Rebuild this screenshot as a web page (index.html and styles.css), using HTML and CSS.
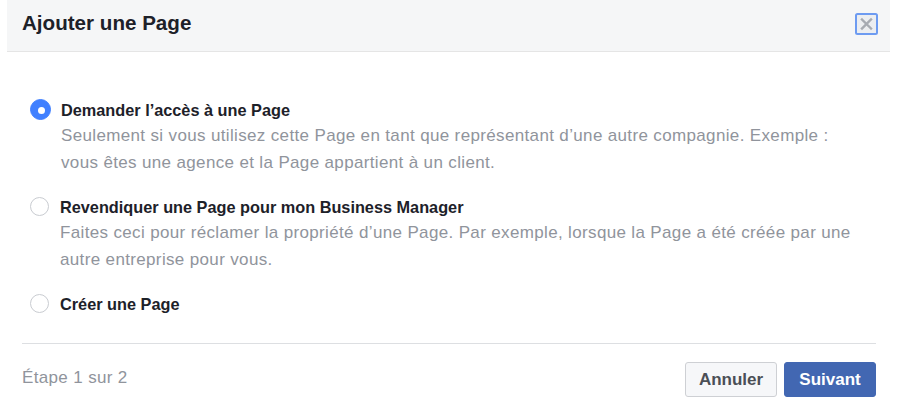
FILE: index.html
```html
<!DOCTYPE html>
<html lang="fr">
<head>
    <meta charset="UTF-8">
    <title>Ajouter une Page</title>
    <link rel="stylesheet" href="styles.css">
</head>
<body>
    <div class="dialog">
        <div class="dialog-header">
            <h1 class="dialog-title">Ajouter une Page</h1>
            <button class="close-btn" aria-label="Fermer">
                <svg width="23" height="22" viewBox="0 0 23 22">
                    <rect x="1" y="1" width="21" height="20" rx="1.5" fill="#eceef1" stroke="#6d9bf1" stroke-width="2"/>
                    <path d="M7 6.5 L16 15.5 M16 6.5 L7 15.5" stroke="#a7abb2" stroke-width="2.4" stroke-linecap="square"/>
                </svg>
            </button>
        </div>

        <div class="dialog-body">
            <label class="option">
                <span class="radio checked"></span>
                <span class="option-text">
                    <span class="option-label">Demander l’accès à une Page</span>
                    <span class="option-desc">Seulement si vous utilisez cette Page en tant que représentant d’une autre compagnie. Exemple : vous êtes une agence et la Page appartient à un client.</span>
                </span>
            </label>
            <label class="option">
                <span class="radio"></span>
                <span class="option-text">
                    <span class="option-label">Revendiquer une Page pour mon Business Manager</span>
                    <span class="option-desc">Faites ceci pour réclamer la propriété d’une Page. Par exemple, lorsque la Page a été créée par une autre entreprise pour vous.</span>
                </span>
            </label>
            <label class="option">
                <span class="radio"></span>
                <span class="option-text">
                    <span class="option-label">Créer une Page</span>
                </span>
            </label>
        </div>

        <div class="dialog-footer">
            <span class="step">Étape 1 sur 2</span>
            <div class="actions">
                <button class="btn">Annuler</button>
                <button class="btn btn-primary">Suivant</button>
            </div>
        </div>
    </div>
</body>
</html>
```

FILE: styles.css
```css
body {
    margin: 0;
    background-color: #fff;
    font-family: "Liberation Sans", Arial, Helvetica, sans-serif;
    color: #1d2129;
}
.dialog {
    width: 883px;
    margin-left: 7px;
}
.dialog-header {
    height: 51px;
    background-color: #f5f6f7;
    border-bottom: 1px solid #e5e5e5;
    display: flex;
    align-items: flex-start;
    justify-content: space-between;
    padding: 0 12px 0 15px;
}
.dialog-title {
    margin: 0;
    padding-top: 11px;
    font-size: 20.6px;
    line-height: 24px;
    font-weight: bold;
    color: #1d2129;
}
.close-btn {
    margin-top: 13px;
    padding: 0;
    border: 0;
    background: none;
    width: 23px;
    height: 22px;
    display: block;
}
.close-btn svg {
    display: block;
}
.dialog-body {
    padding: 47px 30px 28px 23px;
}
.option {
    display: flex;
    align-items: flex-start;
    margin-bottom: 20px;
}
.option:last-child {
    margin-bottom: 0;
}
.radio {
    flex: none;
    width: 19px;
    height: 19px;
    margin: 1px 11px 0 0;
    border: 1px solid #c9ccd1;
    border-radius: 50%;
    background-color: #fff;
    box-sizing: border-box;
    position: relative;
}
.radio.checked {
    border-color: #4080ff;
    background-color: #4080ff;
    width: 21px;
    height: 21px;
    margin: 0 10px 0 0;
}
.radio.checked::after {
    content: "";
    position: absolute;
    left: 7px;
    top: 7px;
    width: 7px;
    height: 7px;
    border-radius: 50%;
    background-color: #fff;
}
.option-text {
    display: flex;
    flex-direction: column;
}
.option-label {
    font-size: 16.3px;
    line-height: 22px;
    font-weight: bold;
    color: #1d2129;
}
.option-desc {
    margin-top: 1px;
    font-size: 17px;
    letter-spacing: 0.35px;
    line-height: 27px;
    color: #90949c;
}
.dialog-footer {
    margin: 0 14px 0 15px;
    border-top: 1px solid #dddfe2;
    padding: 18px 0 13px;
    display: flex;
    align-items: center;
    justify-content: space-between;
}
.step {
    margin-bottom: 4px;
    font-size: 17px;
    letter-spacing: 0.35px;
    color: #90949c;
}
.actions {
    display: flex;
    gap: 7px;
}
.btn {
    width: 92px;
    height: 35px;
    padding: 0;
    border: 1px solid #ced0d4;
    border-radius: 3px;
    background-color: #f6f7f9;
    color: #4b4f56;
    font-family: inherit;
    font-size: 17px;
    font-weight: bold;
}
.btn-primary {
    background-color: #4267b2;
    border-color: #4267b2;
    color: #fff;
}
```
